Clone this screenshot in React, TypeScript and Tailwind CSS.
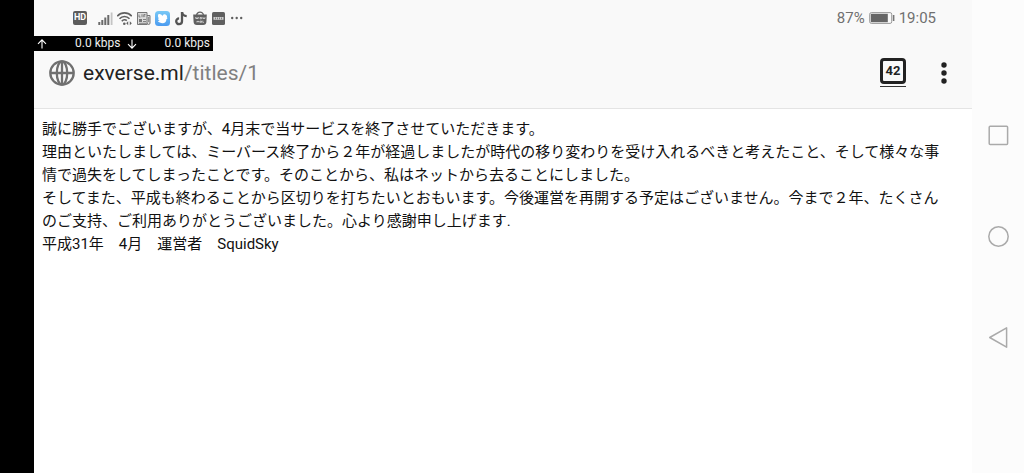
import React from 'react';

const paragraphs = [
  '誠に勝手でございますが、4月末で当サービスを終了させていただきます。',
  '理由といたしましては、ミーバース終了から２年が経過しましたが時代の移り変わりを受け入れるべきと考えたこと、そして様々な事情で過失をしてしまったことです。そのことから、私はネットから去ることにしました。',
  'そしてまた、平成も終わることから区切りを打ちたいとおもいます。今後運営を再開する予定はございません。今まで２年、たくさんのご支持、ご利用ありがとうございました。心より感謝申し上げます.',
  '平成31年　4月　運営者　SquidSky',
];

function SignalIcon() {
  return (
    <svg viewBox="0 0 15 15" className="size-[15px]" fill="#6b6b6b" aria-hidden="true">
      <rect x="0.3" y="11" width="2" height="3" />
      <rect x="3.3" y="9" width="2" height="5" />
      <rect x="6.3" y="6.5" width="2" height="7.5" />
      <rect x="9.3" y="4" width="2" height="10" />
      <rect x="12.7" y="1.5" width="1.8" height="12.5" fill="#c4c4c4" />
    </svg>
  );
}

function WifiIcon() {
  return (
    <svg viewBox="0 0 15 15" className="size-[15px]" fill="none" stroke="#606060" strokeWidth="1.6" aria-hidden="true">
      <path d="M0.2 5.2C4.2 0.7 10.8 0.7 14.8 5.2" />
      <path d="M2.5 7.8C5.3 4.7 9.7 4.7 12.5 7.8" />
      <path d="M4.8 10.3C6.3 8.5 8.4 8.4 9.8 9.6" />
      <circle cx="7.3" cy="12.7" r="1.3" fill="#606060" stroke="none" />
      <path d="M11.2 10.2L9.2 12.2L11.2 14.2zM12.8 10.2L14.8 12.2L12.8 14.2z" fill="#606060" stroke="none" />
    </svg>
  );
}

function NewsIcon() {
  return (
    <svg viewBox="0 0 15 15" className="size-[15px]" fill="none" stroke="#777" aria-hidden="true">
      <path d="M1.5 1.5h9.5v12h-9.5zM11 4.5h3v7.5a1.5 1.5 0 0 1-3 0" fill="#dcdcdc" />
      <path d="M3 3.5v2.5h1.5M6 3.2v3M9.5 3.5H7.8v2.7M7.8 5h1.5" strokeWidth="0.9" />
      <rect x="3" y="8" width="3" height="3" fill="#777" stroke="none" />
      <path d="M7 8.5h3M7 10.5h3M3 12.3h7M12.7 6v5" strokeWidth="0.9" />
    </svg>
  );
}

function BirdIcon() {
  return (
    <svg viewBox="0 0 15 15" className="size-[15px]" aria-hidden="true">
      <defs>
        <linearGradient id="sky" x1="0" y1="0" x2="0" y2="1">
          <stop offset="0" stopColor="#79c9f6" />
          <stop offset="1" stopColor="#4a9bf0" />
        </linearGradient>
      </defs>
      <rect width="15" height="15" rx="3.5" fill="url(#sky)" />
      <path
        d="M3.6 3C5.2 2.6 6.8 3.4 7.4 5C8.2 3 10 2.6 11.4 4.2C12.2 5 12.2 5.8 11.8 6.4C12.9 6.6 12.6 7.6 11.4 8.2C11.4 10.8 9.8 12.2 7.6 12.2C5.6 12.2 3.8 11.4 2.8 10C3.6 10.2 4.3 10 4.7 9.6C3.5 9.1 3 8.2 3 7.4C3.4 7.6 3.8 7.6 4 7.4C2.8 6.2 2.6 4.4 3.6 3z"
        fill="#fff"
      />
    </svg>
  );
}

function NoteIcon() {
  return (
    <svg viewBox="0 0 15 15" className="size-[15px]" fill="none" stroke="#555" strokeWidth="2.3" aria-hidden="true">
      <path d="M8 1v9.3a2.9 2.9 0 1 1-2.9-2.9" />
      <path d="M8 1.2c0.3 2.4 2 3.8 4.7 4" />
    </svg>
  );
}

function BagIcon() {
  return (
    <svg viewBox="0 0 15 15" className="size-[15px]" aria-hidden="true">
      <path d="M3.6 4.5C3.6 0 10.4 0 10.4 4.5" fill="none" stroke="#606060" strokeWidth="1.3" />
      <path d="M0.2 3.5h13.6l-0.4 7.5a3.2 3.2 0 0 1-3.2 3h-6.4a3.2 3.2 0 0 1-3.2-3z" fill="#606060" />
      <path
        d="M2.5 6l0.7 2l0.8-1.5l0.8 1.5l0.7-2M7 6.5h1.5v1.3H7zM9.7 6.3l0.5 1.6l0.7-1.2l0.7 1.2l0.5-1.6M4 11.5V10l1 0.8l1-0.8v1.5M7.2 10h1.3v1.4H7.2zM9.8 9.6v1.9h1"
        fill="none"
        stroke="#e8e8e8"
        strokeWidth="0.7"
      />
    </svg>
  );
}

function CardIcon() {
  return (
    <svg viewBox="0 0 15 15" className="size-[15px]" aria-hidden="true">
      <rect y="1" width="13" height="13" rx="1.5" fill="#606060" />
      <rect x="1.5" y="6" width="10" height="2.8" fill="#cfcfcf" />
      <path d="M3.5 6.5v1.8M5.5 6.5v1.8M7.5 6.5v1.8M9.5 6.5v1.8" stroke="#707070" strokeWidth="0.8" />
    </svg>
  );
}

function MoreIcon() {
  return (
    <svg viewBox="0 0 15 15" className="size-[15px]" fill="#606060" aria-hidden="true">
      <circle cx="1.2" cy="7" r="1.2" />
      <circle cx="5.7" cy="7" r="1.2" />
      <circle cx="10.2" cy="7" r="1.2" />
    </svg>
  );
}

function BatteryIcon() {
  return (
    <svg viewBox="0 0 26 12" className="h-3 w-[26px]" aria-hidden="true">
      <rect x="0.7" y="0.6" width="22" height="10.8" rx="1.6" fill="none" stroke="#999" />
      <rect x="1.8" y="1.8" width="17" height="8.4" fill="#666" />
      <rect x="23.8" y="3" width="1.6" height="6" fill="#777" />
    </svg>
  );
}

function GlobeIcon() {
  return (
    <svg viewBox="0 0 26 26" className="size-[26px]" fill="none" stroke="#707070" strokeWidth="2.3" aria-hidden="true">
      <circle cx="13" cy="13" r="11.7" />
      <ellipse cx="13" cy="13" rx="5.2" ry="11.7" />
      <path d="M13 1.2v23.6M1.2 13h23.6" />
    </svg>
  );
}

function ArrowIcon({ down }: { down?: boolean }) {
  return (
    <svg viewBox="0 0 10 10" className="size-[10px]" fill="none" stroke="#fff" strokeWidth="1.1" aria-hidden="true">
      <path d={down ? 'M5 0.5v8.5M1 5.2l4 4l4-4' : 'M5 9.5v-8.5M1 4.8l4-4l4 4'} />
    </svg>
  );
}

function StatusBar() {
  return (
    <div className="flex h-9 items-center justify-between pl-[39px] pr-9 text-[15px] text-[#707070]">
      <div className="flex items-center gap-1">
        <span className="mr-[7px] flex h-[14px] w-[14px] items-center justify-center rounded-xs bg-[#5c5c5c] text-[9px] font-bold text-white">
          HD
        </span>
        <SignalIcon />
        <WifiIcon />
        <NewsIcon />
        <BirdIcon />
        <NoteIcon />
        <BagIcon />
        <CardIcon />
        <MoreIcon />
      </div>
      <div className="flex items-center gap-1">
        <span>87%</span>
        <BatteryIcon />
        <span>19:05</span>
      </div>
    </div>
  );
}

function SpeedMeter() {
  return (
    <div className="grid w-[179px] grid-cols-2 gap-[6px] bg-black px-[3px] text-[12px] leading-[15px] text-[#eee]">
      <div className="flex items-center justify-between">
        <ArrowIcon />
        <span>0.0 kbps</span>
      </div>
      <div className="flex items-center justify-between">
        <ArrowIcon down />
        <span>0.0 kbps</span>
      </div>
    </div>
  );
}

function AddressBar() {
  return (
    <div className="flex h-[58px] items-center justify-between border-b border-[#e4e4e4] pb-[14px] pl-[15px] pr-4">
      <div className="flex items-center gap-2">
        <button type="button" aria-label="Site information">
          <GlobeIcon />
        </button>
        <button type="button" className="text-[21px] leading-6 text-[#808080]">
          <span className="text-[#222]">exverse.ml</span>/titles/1
        </button>
      </div>
      <div className="flex items-center gap-[26px]">
        <button type="button" aria-label="Tabs, 42 open" className="border-b border-[#333] pb-[2px]">
          <span className="flex size-[26px] items-center justify-center rounded-sm border-[3px] border-[#222] text-[13px] font-bold text-[#222]">
            42
          </span>
        </button>
        <button type="button" aria-label="Menu">
          <svg viewBox="0 0 24 24" className="size-6" fill="#222" aria-hidden="true">
            <circle cx="12" cy="4" r="2.7" />
            <circle cx="12" cy="12" r="2.7" />
            <circle cx="12" cy="20" r="2.7" />
          </svg>
        </button>
      </div>
    </div>
  );
}

function NavigationBar() {
  return (
    <nav className="flex w-[52px] shrink-0 flex-col items-center justify-center gap-20 bg-[#fcfcfc]">
      <button type="button" aria-label="Recent apps">
        <svg viewBox="0 0 21 21" className="size-[21px]" fill="none" stroke="#aaa" strokeWidth="1.5">
          <rect x="1.2" y="1.2" width="18.4" height="18.4" rx="1" />
        </svg>
      </button>
      <button type="button" aria-label="Home">
        <svg viewBox="0 0 21 21" className="size-[21px]" fill="none" stroke="#aaa" strokeWidth="1.5">
          <circle cx="10.5" cy="10.5" r="9.7" />
        </svg>
      </button>
      <button type="button" aria-label="Back">
        <svg viewBox="0 0 21 21" className="size-[21px]" fill="none" stroke="#aaa" strokeWidth="1.5" strokeLinejoin="round">
          <path d="M1.7 10.5L18.6 0.8V20.2z" />
        </svg>
      </button>
    </nav>
  );
}

export default function App() {
  return (
    <div className="flex min-h-screen bg-white font-['Roboto','Noto_Sans_CJK_JP',sans-serif]">
      <div className="w-[34px] shrink-0 bg-black" />
      <div className="min-w-0 flex-1">
        <header className="bg-[#f9f9f9]">
          <StatusBar />
          <SpeedMeter />
          <AddressBar />
        </header>
        <main lang="ja" className="py-[9px] pl-2 pr-5 text-[15px] leading-[23px] text-[#111]">
          {paragraphs.map((text) => (
            <p key={text}>{text}</p>
          ))}
        </main>
      </div>
      <NavigationBar />
    </div>
  );
}
